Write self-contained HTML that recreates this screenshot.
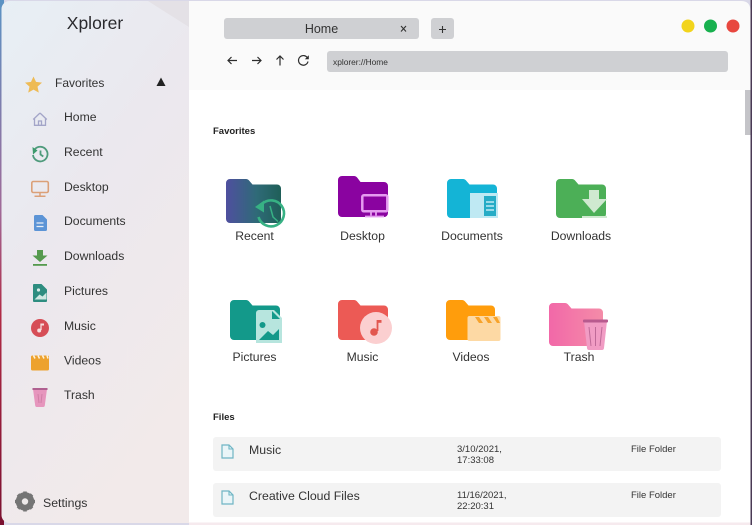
<!DOCTYPE html>
<html><head><meta charset="utf-8"><style>
html,body{margin:0;padding:0;width:752px;height:525px;overflow:hidden;background:#fff}
svg{display:block;position:absolute;left:0;top:0;filter:blur(.35px)}
text{font-family:"Liberation Sans",sans-serif;fill:#333}
</style></head><body>
<svg width="752" height="525" viewBox="0 0 752 525" xmlns="http://www.w3.org/2000/svg">
<defs>
<linearGradient id="edge" x1="0" y1="0" x2="0" y2="1"><stop offset="0" stop-color="#5b93c4"/><stop offset=".4" stop-color="#a06a98"/><stop offset=".6" stop-color="#b02a45"/><stop offset="1" stop-color="#7a1030"/></linearGradient>
<linearGradient id="side" x1="0" y1="0" x2="0.5" y2="1"><stop offset="0" stop-color="#e7eff5"/><stop offset=".45" stop-color="#ebe8ee"/><stop offset="1" stop-color="#f2eaea"/></linearGradient>
<linearGradient id="rec" x1="0" y1="0" x2="1" y2="0"><stop offset="0" stop-color="#4f4f9f"/><stop offset=".55" stop-color="#2f6a78"/><stop offset="1" stop-color="#1f5f58"/></linearGradient>
<linearGradient id="tr" x1="0" y1="0" x2="1" y2="0"><stop offset="0" stop-color="#f268a8"/><stop offset="1" stop-color="#f48ca8"/></linearGradient>
</defs>
<rect width="752" height="525" fill="#d9d8e8"/>
<rect y="0" width="4" height="525" fill="url(#edge)"/>
<rect x="750.500" y="0" width="1.500" height="525" fill="#4a3a55"/>
<rect x="1.500" y="1" width="200" height="522" rx="8" fill="url(#side)"/>
<path d="M148 1H189V27Z" fill="#e4e1e6"/>
<path d="M189 1H741Q750.500 1 750.500 11V525H189Z" fill="#fafafa"/>
<rect x="189" y="90" width="561.500" height="435" fill="#fff"/>
<rect x="189" y="522.500" width="561.500" height="2.500" fill="#f6eaee"/>
<rect x="745" y="90" width="5.500" height="45" fill="#c4c4c8"/>

<text x="95" y="29" font-size="17.500" text-anchor="middle" style="fill:#2a2a2e">Xplorer</text>
<text x="55" y="87" font-size="12">Favorites</text>
<path d="M161 77.500l4.500 8.500h-9z" fill="#222"/>
<g font-size="12.200">
<text x="64" y="121">Home</text><text x="64" y="156">Recent</text><text x="64" y="191">Desktop</text><text x="64" y="225">Documents</text><text x="64" y="260">Downloads</text><text x="64" y="295">Pictures</text><text x="64" y="330">Music</text><text x="64" y="364.500">Videos</text><text x="64" y="399">Trash</text>
</g>
<text x="43" y="507" font-size="12.300">Settings</text>

<!-- sidebar icons -->
<path d="M33.500 76.500l2.500 5.400 6 .7-4.500 4 1.300 6-5.300-3-5.300 3 1.300-6-4.500-4 6-.7z" fill="#eebb55"/>
<path d="M40 113l6.800 6.500M40 113l-6.800 6.500M34.500 118.500v6.800h11v-6.800M38.500 125.300v-4.300h3v4.300" fill="none" stroke="#a3a5c8" stroke-width="1.300"/>
<g fill="none" stroke="#4f9b7c" stroke-width="1.800"><path d="M35 149a7.300 7.300 0 1 1-2 6"/><path d="M40.500 150.500v4l2.800 2"/></g><path d="M32.500 147l5 3.500-4.500 4z" fill="#3d9a6c"/>
<rect x="31.800" y="181.500" width="16.500" height="11" rx="1.500" fill="none" stroke="#dba078" stroke-width="1.600"/><path d="M40 193v2.500M34.500 196.300h11" stroke="#dba078" stroke-width="1.500"/>
<path d="M35.500 215h7l4.500 4.500v10a1.500 1.500 0 0 1-1.500 1.500h-10a1.500 1.500 0 0 1-1.500-1.500v-13a1.500 1.500 0 0 1 1.500-1.500z" fill="#5c94d6"/><path d="M36.500 223h7M36.500 226.500h7" stroke="#e8eef5" stroke-width="1.200"/>
<path d="M37 250h6v5.500h4.500L40 262l-7.500-6.500H37z" fill="#559a4e"/><rect x="33" y="264" width="14" height="1.800" fill="#559a4e"/>
<path d="M34 284h7.500l5.500 5.500v11.500a1 1 0 0 1-1 1H34a1 1 0 0 1-1-1v-16a1 1 0 0 1 1-1z" fill="#2e8d80"/><circle cx="38.500" cy="290" r="1.600" fill="#d6ece6"/><path d="M34.500 299.500l5-5 3 2 4-4v7z" fill="#cfe8e2"/>
<circle cx="40" cy="328" r="9" fill="#d64d56"/><path d="M41 323.500v6.500" stroke="#f7dede" stroke-width="1.300"/><circle cx="39.200" cy="330.500" r="2" fill="#f7dede"/><path d="M41 323.500h3v2h-3z" fill="#f7dede"/>
<rect x="31" y="355.500" width="18" height="15" rx="1.500" fill="#eda22e"/><path d="M33.500 355.500l1.500 3M38 355.500l1.500 3M42.500 355.500l1.500 3M47 355.500l1 3" stroke="#fff2da" stroke-width="1.500"/>
<path d="M33 389h14l-2.200 16.500q-.2 1.500-1.500 1.500h-6.600q-1.300 0-1.500-1.500z" fill="#e696bd"/><rect x="32.500" y="388" width="15" height="2" fill="#b06090"/><path d="M38 394l1 9M42 394l-1 9" stroke="#d07fa6"/>
<g transform="translate(25 501.500)"><circle r="7" fill="none" stroke="#757575" stroke-width="4.500"/><g stroke="#757575" stroke-width="3.600"><path d="M0-10v20M-10 0h20M-7-7L7 7M7-7L-7 7"/></g><circle r="3.200" fill="#eeeaea"/></g>

<!-- tabs -->
<rect x="224" y="18" width="195" height="21" rx="3" fill="#cfd0d3"/>
<text x="321.500" y="33" font-size="12.500" text-anchor="middle">Home</text>
<path d="M401 26l5 5.500M406 26l-5 5.500" stroke="#333" stroke-width="1.100"/>
<rect x="431" y="18" width="23" height="21" rx="3" fill="#cfd0d3"/>
<path d="M442.500 26v7M439 29.500h7" stroke="#333" stroke-width="1.100"/>
<circle cx="688" cy="26" r="6.500" fill="#f2d41c"/><circle cx="710.500" cy="26" r="6.500" fill="#18b04e"/><circle cx="733" cy="26" r="6.500" fill="#e8473f"/>
<g fill="none" stroke="#2c2c2c" stroke-width="1.200"><path d="M237 60.500h-9M231.500 57l-3.500 3.500 3.500 3.500"/><path d="M252 60.500h9M257.500 57l3.500 3.500-3.500 3.500"/><path d="M280 65.500v-9.500M276.500 59.500l3.500-3.500 3.500 3.500"/><path d="M307.500 58a4.800 4.800 0 1 0 .5 3.500"/></g><path d="M308.800 55.300v4h-4z" fill="#2c2c2c"/>
<rect x="327" y="51" width="401" height="21" rx="3" fill="#cfd0d3"/>
<text x="333" y="65" font-size="8.400">xplorer://Home</text>

<text x="213" y="134" font-size="9.500" font-weight="bold" style="fill:#222">Favorites</text>

<!-- Recent -->
<path d="M230 179h16q2 0 3.500 2l3 3.500h24.500a4 4 0 0 1 4 4V219a4 4 0 0 1-4 4H230a4 4 0 0 1-4-4V183a4 4 0 0 1 4-4z" fill="url(#rec)"/>
<path d="M262 204A13 13 0 1 1 258.500 217" fill="none" stroke="#37b184" stroke-width="2.600"/><path d="M255 207l9-6.500v12z" fill="#37b184"/><path d="M270 206l3 11 5 4.500" fill="none" stroke="#37b184" stroke-width="1.500"/>
<!-- Desktop -->
<path d="M342 176h12q2 0 3.500 2l3 4h23.500a4 4 0 0 1 4 4v27a4 4 0 0 1-4 4H342a4 4 0 0 1-4-4V180a4 4 0 0 1 4-4z" fill="#8a03a0"/>
<rect x="362.300" y="195.300" width="25" height="16" rx="1.500" fill="none" stroke="#e59cf0" stroke-width="2.500"/><path d="M371 212v3.500M376 212v3.500M365 216.500h19" stroke="#e59cf0" stroke-width="1.800"/>
<!-- Documents -->
<path d="M451 179h12q2 0 3.500 2l3 3.500h23.500a4 4 0 0 1 4 4V214a4 4 0 0 1-4 4H451a4 4 0 0 1-4-4V183a4 4 0 0 1 4-4z" fill="#14b4d6"/>
<path d="M470 193h28v25h-28z" fill="#bfe9f3"/><rect x="484" y="196" width="12" height="20" fill="#26acc6"/><path d="M486 202h8M486 206h8M486 210h8" stroke="#bfe9f3" stroke-width="1.500"/>
<!-- Downloads -->
<path d="M560 179h12q2 0 3.500 2l3 3.500h23.500a4 4 0 0 1 4 4V214a4 4 0 0 1-4 4H560a4 4 0 0 1-4-4V183a4 4 0 0 1 4-4z" fill="#4caf57"/>
<path d="M589 190h10v9h8l-13 14-12-14h7z" fill="#cfe9d0"/><rect x="582" y="216" width="25" height="2" fill="#cfe9d0"/>
<!-- Pictures -->
<path d="M234 300h12q2 0 3.500 2l3 3.500h23.500a4 4 0 0 1 4 4V336a4 4 0 0 1-4 4H234a4 4 0 0 1-4-4V304a4 4 0 0 1 4-4z" fill="#13998a"/>
<path d="M259 310h15l8 8v25h-26v-30a3 3 0 0 1 3-3z" fill="#b7e5de"/><circle cx="262.500" cy="325" r="3" fill="#13998a"/><path d="M259 340l9-9 5 4 6-6v11zM272 311l8 8h-8z" fill="#13998a"/>
<!-- Music -->
<path d="M342 300h12q2 0 3.500 2l3 3.500h23.500a4 4 0 0 1 4 4V336a4 4 0 0 1-4 4H342a4 4 0 0 1-4-4V304a4 4 0 0 1 4-4z" fill="#ec5a55"/>
<circle cx="376" cy="328" r="16" fill="#fbcfd0"/><path d="M377.500 320v11" stroke="#e2574f" stroke-width="1.800"/><circle cx="374" cy="332" r="3.800" fill="#e2574f"/><path d="M377 320h4.500v2.800H377z" fill="#e2574f"/>
<!-- Videos -->
<path d="M450 300h12q2 0 3.500 2l3 3.500h22.500a4 4 0 0 1 4 4V336a4 4 0 0 1-4 4H450a4 4 0 0 1-4-4V304a4 4 0 0 1 4-4z" fill="#ff9d0c"/>
<rect x="467.500" y="316" width="33" height="25" rx="2" fill="#fdd9a4"/><path d="M475 317l4 6h4l-4-6zM484 317l4 6h4l-4-6zM493 317l4 6h3l-3-6z" fill="#f7a32b"/>
<!-- Trash -->
<path d="M553 303h12q2 0 3.500 2l3 3.500h27.500a4 4 0 0 1 4 4V342a4 4 0 0 1-4 4H553a4 4 0 0 1-4-4V307a4 4 0 0 1 4-4z" fill="url(#tr)"/>
<path d="M584 321h23l-3 27q-.2 2-2 2h-13q-1.800 0-2-2z" fill="#f19cc4"/><rect x="583" y="319.500" width="25" height="3" rx="1" fill="#b85a8e"/><path d="M589 327l2 19M595.500 327v19M602 327l-2 19" stroke="#bf6a98" stroke-width="1"/>

<g font-size="12.200" text-anchor="middle">
<text x="254.500" y="240">Recent</text><text x="362.500" y="240">Desktop</text><text x="472" y="240">Documents</text><text x="581" y="240">Downloads</text>
<text x="254.500" y="361">Pictures</text><text x="362.500" y="361">Music</text><text x="471" y="361">Videos</text><text x="579" y="361">Trash</text>
</g>

<text x="213" y="420" font-size="9.500" font-weight="bold" style="fill:#222">Files</text>
<rect x="213" y="437" width="508" height="34" rx="3" fill="#f3f3f3"/>
<rect x="213" y="483" width="508" height="34" rx="3" fill="#f3f3f3"/>
<g fill="#eaf5f8" stroke="#6fb5c4" stroke-width="1.200">
<path d="M222 445h7l4 4v9h-11z"/><path d="M222 491h7l4 4v9h-11z"/></g>
<path d="M229 445v4h4M229 491v4h4" fill="none" stroke="#6fb5c4" stroke-width="1.100"/>
<text x="249" y="454" font-size="12.300">Music</text>
<text x="249" y="500" font-size="12.300">Creative Cloud Files</text>
<g font-size="9.500">
<text x="457" y="452">3/10/2021,</text><text x="457" y="463">17:33:08</text>
<text x="631" y="452">File Folder</text>
<text x="457" y="498">11/16/2021,</text><text x="457" y="509">22:20:31</text>
<text x="631" y="498">File Folder</text>
</g>
</svg>
</body></html>
